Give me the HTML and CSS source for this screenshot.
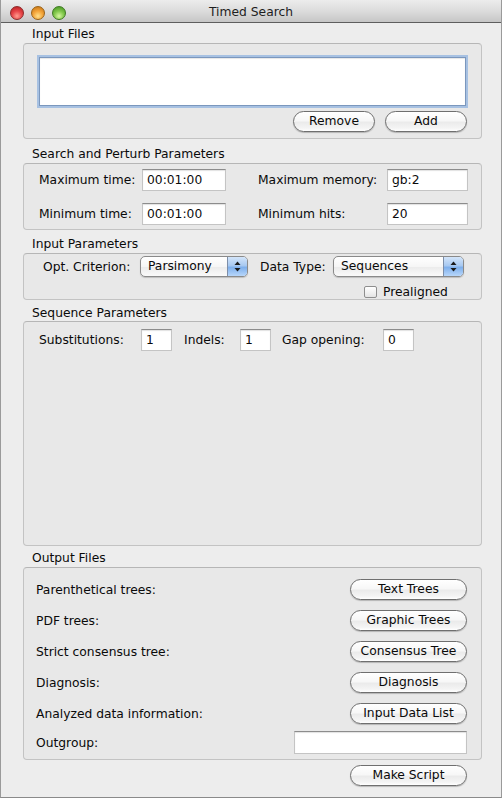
FILE: index.html
```html
<!DOCTYPE html>
<html>
<head>
<meta charset="utf-8">
<title>Timed Search</title>
<link rel="stylesheet" href="styles.css">
</head>
<body>
<div class="window">
  <div class="titlebar">
    <div class="lights">
      <span class="light red"></span>
      <span class="light orange"></span>
      <span class="light green"></span>
    </div>
    <div class="title">Timed Search</div>
    <div></div>
  </div>

  <div class="content">
    <div class="glabel sec-files">Input Files</div>
    <div class="group box-files">
      <div class="filelist"></div>
      <div class="btnrow">
        <button class="btn btn-small">Remove</button>
        <button class="btn btn-small">Add</button>
      </div>
    </div>

    <div class="glabel sec-search">Search and Perturb Parameters</div>
    <div class="group box-search">
      <div class="grid-search">
        <span class="lbl">Maximum time:</span>
        <div class="field">00:01:00</div>
        <span class="lbl">Maximum memory:</span>
        <div class="field">gb:2</div>
        <span class="lbl">Minimum time:</span>
        <div class="field">00:01:00</div>
        <span class="lbl">Minimum hits:</span>
        <div class="field">20</div>
      </div>
    </div>

    <div class="glabel sec-input">Input Parameters</div>
    <div class="group box-input">
      <div class="popup-row">
        <span class="lbl lbl-crit">Opt. Criterion:</span>
        <div class="popup popup-crit">
          <span class="popup-text">Parsimony</span>
          <span class="popup-arrows"><svg width="7" height="11" viewBox="0 0 7 11"><path d="M3.5 0.5 L6.5 4 L0.5 4 Z" fill="#1a1a1a"/><path d="M3.5 10.5 L6.5 7 L0.5 7 Z" fill="#1a1a1a"/></svg></span>
        </div>
        <span class="lbl lbl-type">Data Type:</span>
        <div class="popup popup-type">
          <span class="popup-text">Sequences</span>
          <span class="popup-arrows"><svg width="7" height="11" viewBox="0 0 7 11"><path d="M3.5 0.5 L6.5 4 L0.5 4 Z" fill="#1a1a1a"/><path d="M3.5 10.5 L6.5 7 L0.5 7 Z" fill="#1a1a1a"/></svg></span>
        </div>
      </div>
      <div class="check-row">
        <span class="checkbox"></span>
        <span class="check-label">Prealigned</span>
      </div>
    </div>

    <div class="glabel sec-seq">Sequence Parameters</div>
    <div class="group box-seq">
      <div class="seq-row">
        <span class="lbl lbl-subs">Substitutions:</span>
        <div class="field field-num">1</div>
        <span class="lbl lbl-indels">Indels:</span>
        <div class="field field-num">1</div>
        <span class="lbl lbl-gap">Gap opening:</span>
        <div class="field field-num">0</div>
      </div>
    </div>

    <div class="glabel sec-out">Output Files</div>
    <div class="group box-out">
      <div class="out-row">
        <span class="lbl">Parenthetical trees:</span>
        <button class="btn btn-wide">Text Trees</button>
      </div>
      <div class="out-row">
        <span class="lbl">PDF trees:</span>
        <button class="btn btn-wide">Graphic Trees</button>
      </div>
      <div class="out-row">
        <span class="lbl">Strict consensus tree:</span>
        <button class="btn btn-wide">Consensus Tree</button>
      </div>
      <div class="out-row">
        <span class="lbl">Diagnosis:</span>
        <button class="btn btn-wide">Diagnosis</button>
      </div>
      <div class="out-row">
        <span class="lbl">Analyzed data information:</span>
        <button class="btn btn-wide">Input Data List</button>
      </div>
      <div class="out-row out-row-field">
        <span class="lbl">Outgroup:</span>
        <div class="field field-outgroup"></div>
      </div>
    </div>

    <div class="script-row">
      <button class="btn btn-wide">Make Script</button>
    </div>
  </div>
</div>
</body>
</html>
```

FILE: styles.css
```css
* { box-sizing: border-box; }

html, body {
  margin: 0;
  padding: 0;
  background: #ffffff;
}

body {
  font-family: "DejaVu Sans", "Liberation Sans", sans-serif;
  font-size: 12.3px;
  color: #0a0a0a;
}

.window {
  width: 502px;
  height: 798px;
  background: #ededed;
  border-left: 1px solid #9a9a9a;
  border-right: 1px solid #9a9a9a;
  border-bottom: 1px solid #8a8a8a;
  display: flex;
  flex-direction: column;
}

/* ---------- title bar ---------- */
.titlebar {
  height: 23px;
  border-bottom: 1px solid #5e5e5e;
  background: linear-gradient(to bottom, #ececec 0%, #dcdcdc 50%, #c6c6c6 100%);
  display: grid;
  grid-template-columns: 1fr auto 1fr;
  align-items: center;
  flex: none;
}

.lights {
  display: flex;
  gap: 7px;
  padding-left: 9px;
  padding-top: 3px;
}

.light {
  width: 14px;
  height: 14px;
  border-radius: 50%;
  display: block;
}

.red {
  background: radial-gradient(circle at 50% 75%, #ff9d8f 0%, #e8474a 45%, #b3191c 100%);
  border: 1px solid #8d2a2a;
}

.orange {
  background: radial-gradient(circle at 50% 75%, #ffe08a 0%, #f4a53a 45%, #c06e12 100%);
  border: 1px solid #9a6216;
}

.green {
  background: radial-gradient(circle at 50% 75%, #d7f7a0 0%, #82c84c 45%, #3f8f1e 100%);
  border: 1px solid #3e7a22;
}

.title {
  font-size: 12.3px;
  color: #1e1e1e;
  padding-top: 1px;
}

/* ---------- content ---------- */
.content {
  padding: 3px 19px 0 22px;
  display: flex;
  flex-direction: column;
}

.glabel {
  height: 16px;
  line-height: 16px;
  margin: 0 0 1px 9px;
}

.sec-search { margin-top: 7px; }
.sec-input { margin-top: 6px; }
.sec-seq { margin-top: 5px; margin-bottom: 0; }
.sec-out { margin-top: 4px; }

.group {
  border: 1px solid #c3c3c3;
  border-top-color: #b6b6b6;
  border-radius: 4px;
  background: #e8e8e8;
}

.lbl {
  white-space: nowrap;
  line-height: 16px;
}

/* fields */
.field {
  height: 22px;
  background: #ffffff;
  border: 1px solid #c4c4c4;
  border-top-color: #8c8c8c;
  box-shadow: inset 0 1px 1px rgba(0, 0, 0, 0.12);
  padding: 0 4px;
  line-height: 21px;
  white-space: nowrap;
  overflow: hidden;
}

/* buttons */
.btn {
  font-family: "DejaVu Sans", "Liberation Sans", sans-serif;
  font-size: 12.3px;
  color: #0a0a0a;
  height: 21px;
  border: 1px solid #6f6f6f;
  border-radius: 11px;
  background: linear-gradient(to bottom, #ffffff 0%, #f7f7f7 45%, #ebebeb 55%, #f4f4f4 85%, #ffffff 100%);
  box-shadow: 0 1px 1px rgba(0, 0, 0, 0.22);
  padding: 0;
  line-height: 19px;
  text-align: center;
  white-space: nowrap;
}

.btn-small { width: 82px; }
.btn-wide { width: 117px; }

/* ---------- Input files ---------- */
.box-files {
  height: 96px;
  padding: 0 14px 0 15px;
  display: flex;
  flex-direction: column;
}

.filelist {
  margin-top: 13px;
  height: 49px;
  margin-right: 1px;
  background: #ffffff;
  border: 1px solid #7b97bd;
  box-shadow: 0 0 0 2px #a7c1e2, inset 0 1px 1px rgba(0, 0, 0, 0.1);
}

.btnrow {
  margin-top: 5px;
  display: flex;
  justify-content: flex-end;
  gap: 10px;
}

/* ---------- Search and perturb ---------- */
.box-search {
  height: 67px;
  padding: 5px 0 0 15px;
}

.grid-search {
  display: grid;
  grid-template-columns: 103px 84px 32px 129px 81px;
  grid-template-rows: 22px 22px;
  row-gap: 12px;
  align-items: center;
}

.grid-search .lbl:nth-of-type(2),
.grid-search .lbl:nth-of-type(4) {
  grid-column: 4;
}

/* ---------- Input parameters ---------- */
.box-input {
  height: 47px;
  padding: 2px 0 0 19px;
  display: flex;
  flex-direction: column;
}

.popup-row {
  display: flex;
  align-items: center;
  height: 21px;
}

.lbl-crit { width: 97px; }
.lbl-type { width: 73px; margin-left: 12px; }

.popup {
  height: 21px;
  border: 1px solid #8a8a8a;
  border-radius: 5px;
  background: linear-gradient(to bottom, #ffffff 0%, #f6f6f6 50%, #ececec 55%, #fafafa 100%);
  box-shadow: 0 1px 1px rgba(0, 0, 0, 0.18);
  display: flex;
  align-items: stretch;
  overflow: hidden;
}

.popup-crit { width: 108px; }
.popup-type { width: 131px; }

.popup-text {
  flex: 1;
  padding-left: 7px;
  line-height: 19px;
}

.popup-arrows {
  width: 20px;
  border-left: 1px solid #7d8ea8;
  background: linear-gradient(to bottom, #d3e5fa 0%, #a8c9f1 45%, #7fb0ec 55%, #b7d6fa 100%);
  display: flex;
  align-items: center;
  justify-content: center;
}

.check-row {
  margin-top: 8px;
  height: 14px;
  padding-left: 321px;
  display: flex;
  align-items: center;
  gap: 6px;
}

.checkbox {
  width: 13px;
  height: 12px;
  border: 1px solid #8e8e8e;
  border-radius: 2px;
  background: linear-gradient(to bottom, #ffffff 0%, #f2f2f2 50%, #e4e4e4 100%);
  display: block;
}

.check-label {
  line-height: 14px;
}

/* ---------- Sequence parameters ---------- */
.box-seq {
  height: 225px;
  padding: 7px 0 0 15px;
}

.seq-row {
  display: flex;
  align-items: center;
  height: 22px;
}

.field-num { width: 31px; }
.lbl-subs { width: 102px; }
.lbl-indels { width: 56px; margin-left: 12px; }
.lbl-gap { width: 101px; margin-left: 11px; }

/* ---------- Output files ---------- */
.box-out {
  height: 193px;
  padding: 11px 14px 0 12px;
  display: flex;
  flex-direction: column;
  gap: 10px;
}

.out-row {
  display: flex;
  align-items: center;
  justify-content: space-between;
  height: 21px;
}

.out-row-field {
  margin-top: -3px;
  height: 23px;
}

.field-outgroup {
  width: 173px;
  height: 23px;
}

.script-row {
  margin-top: 5px;
  display: flex;
  justify-content: flex-end;
  padding-right: 15px;
}
```
